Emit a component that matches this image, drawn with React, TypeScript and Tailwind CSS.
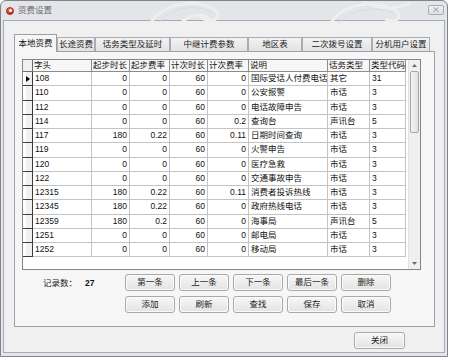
import React from "react";

type Row = [string, string, string, string, string, string, string, string];

const rows: Row[] = [
  ["108", "0", "0", "60", "0", "国际受话人付费电话", "其它", "31"],
  ["110", "0", "0", "60", "0", "公安报警", "市话", "3"],
  ["112", "0", "0", "60", "0", "电话故障申告", "市话", "3"],
  ["114", "0", "0", "60", "0.2", "查询台", "声讯台", "5"],
  ["117", "180", "0.22", "60", "0.11", "日期时间查询", "市话", "3"],
  ["119", "0", "0", "60", "0", "火警申告", "市话", "3"],
  ["120", "0", "0", "60", "0", "医疗急救", "市话", "3"],
  ["122", "0", "0", "60", "0", "交通事故申告", "市话", "3"],
  ["12315", "180", "0.22", "60", "0.11", "消费者投诉热线", "市话", "3"],
  ["12345", "180", "0.22", "60", "0", "政府热线电话", "市话", "3"],
  ["12359", "180", "0.2", "60", "0", "海事局", "声讯台", "5"],
  ["1251", "0", "0", "60", "0", "邮电局", "市话", "3"],
  ["1252", "0", "0", "60", "0", "移动局", "市话", "3"],
];

const headers = ["字头", "起步时长", "起步费率", "计次时长", "计次费率", "说明", "话务类型", "类型代码"];
const numeric = [false, true, true, true, true, false, false, false];

const tabs: { label: string; w: string }[] = [
  { label: "长途资费", w: "w-[38px]" },
  { label: "话务类型及延时", w: "w-[75px]" },
  { label: "中继计费参数", w: "w-[78px]" },
  { label: "地区表", w: "w-[54px]" },
  { label: "二次拨号设置", w: "w-[70px]" },
  { label: "分机用户设置", w: "w-[58px]" },
];

function Btn({ children, w = "w-[50px]" }: { children: React.ReactNode; w?: string }) {
  return (
    <div
      className={`${w} h-[17px] flex items-center justify-center rounded-[3px] border border-[#a9a9a9] bg-gradient-to-b from-[#f7f7f7] to-[#e3e3e3] text-[8.5px] text-[#222] leading-none shadow-[inset_0_0_0_1px_#fbfbfb]`}
    >
      {children}
    </div>
  );
}

export default function App() {
  return (
    <div className="w-[450px] h-[358px] bg-white [font-family:'Liberation_Sans','Noto_Sans_CJK_SC',sans-serif]">
      <div className="relative w-[448px] h-[357px] flex flex-col border border-[#7d848c] rounded-t-[6px] bg-[#e3e5e8] px-[2px] pb-[3px] overflow-hidden">
        {/* decorative swirls */}
        <svg className="absolute left-0 top-0 pointer-events-none" width="448" height="22" viewBox="0 0 448 22">
          <g fill="none" stroke="#eceef0" strokeWidth="3">
            <path d="M150 22 C 160 2, 200 -4, 215 10 C 222 18, 208 24, 200 16" />
            <path d="M180 22 C 190 12, 205 12, 210 20" />
            <path d="M330 22 C 340 4, 372 -2, 392 8 C 404 14, 396 24, 384 18" />
            <path d="M360 -2 C 372 8, 392 10, 410 2" />
          </g>
          <g fill="none" stroke="#d9dcdf" strokeWidth="1">
            <path d="M158 22 C 168 6, 198 2, 210 12" />
            <path d="M338 22 C 350 8, 376 4, 392 12" />
          </g>
        </svg>
        {/* title bar */}
        <div className="relative h-[19px] flex items-center justify-between pl-[3px]">
          <div className="flex items-center gap-[4px]">
            <div className="w-[8px] h-[8px] rounded-full bg-gradient-to-b from-[#f26a5a] to-[#c62a1c] border border-[#a82418] flex items-center justify-center">
              <div className="w-[3px] h-[3px] rounded-full bg-white" />
            </div>
            <span className="text-[8.5px] text-[#6b6b6b] leading-none">资费设置</span>
          </div>
          <div className="w-[16px] h-[10px] mr-[1px] mt-[-2px] rounded-[2px] border border-[#a8acb1] bg-gradient-to-b from-[#eef0f2] to-[#dcdfe3] flex items-center justify-center">
            <svg width="6" height="5" viewBox="0 0 6 5">
              <path d="M0.5 0.5 L5.5 4.5 M5.5 0.5 L0.5 4.5" stroke="#9a9ea3" strokeWidth="1" />
            </svg>
          </div>
        </div>
        {/* client */}
        <div className="flex-1 flex flex-col border border-[#a4abb3] bg-[#f0f0f0]">
          {/* tabs */}
          <div className="relative z-10 flex items-end h-[18px] ml-[10px] mt-[12px]">
            <div className="w-[43px] h-[18px] -mb-px flex items-center justify-center border border-b-0 border-[#9ea2a7] bg-[#f6f6f6] text-[8.5px] text-[#111] leading-none">
              本地资费
            </div>
            {tabs.map((t) => (
              <div
                key={t.label}
                className={`${t.w} h-[14px] flex items-center justify-center border border-b-0 border-[#a9adb2] bg-gradient-to-b from-[#f3f3f3] to-[#e2e2e2] text-[8.5px] text-[#222] leading-none`}
              >
                {t.label}
              </div>
            ))}
          </div>
          {/* panel */}
          <div className="w-[421px] h-[276px] ml-[10px] border border-[#9ea2a7] bg-[#f6f6f6] pl-[7px] pt-[7px] flex flex-col">
            {/* grid */}
            <div className="w-[399px] h-[211px] border border-[#7f868e] bg-white flex">
              <div className="flex-1 overflow-hidden">
                <div className="grid grid-cols-[10px_59px_38px_40px_38px_41px_79px_42px_36px]">
                  <div className="h-[12px] bg-[#f0f0f0] border-r border-b border-[#6e6e6e]" />
                  {headers.map((h) => (
                    <div
                      key={h}
                      className="h-[12px] bg-[#f7f7f7] border-r border-b border-[#8c8c8c] pl-[1px] text-[8.5px] leading-[11px] text-[#111] whitespace-nowrap overflow-hidden"
                    >
                      {h}
                    </div>
                  ))}
                  {rows.map((r, ri) => (
                    <React.Fragment key={r[0]}>
                      <div className="h-[14.25px] bg-[#f0f0f0] border-r border-b border-[#3c3c3c] shadow-[inset_3px_0_0_#ffffff] flex items-center pl-[3px]">
                        {ri === 0 && (
                          <svg width="4" height="6" viewBox="0 0 4 6">
                            <path d="M0 0 L4 3 L0 6 Z" fill="#000" />
                          </svg>
                        )}
                      </div>
                      {r.map((c, ci) => (
                        <div
                          key={ci}
                          className={`h-[14.25px] border-r border-b border-[#c4c4c4] text-[8.5px] leading-[13px] text-[#111] whitespace-nowrap overflow-hidden ${
                            numeric[ci] ? "text-right pr-[2px]" : "pl-[2px]"
                          }`}
                        >
                          {c}
                        </div>
                      ))}
                    </React.Fragment>
                  ))}
                </div>
              </div>
              {/* scrollbar */}
              <div className="w-[12px] h-full bg-[#f0f0f0] border-l border-[#e2e2e2] flex flex-col items-center">
                <div className="h-[11px] w-full flex items-center justify-center">
                  <svg width="5" height="3" viewBox="0 0 5 3">
                    <path d="M0 3 L2.5 0 L5 3 Z" fill="#6a6a6a" />
                  </svg>
                </div>
                <div className="w-[9px] h-[62px] rounded-[2px] border border-[#a7a7a7] bg-gradient-to-r from-[#f4f4f4] to-[#e0e0e0]" />
                <div className="flex-1" />
                <div className="h-[11px] w-full flex items-center justify-center">
                  <svg width="5" height="3" viewBox="0 0 5 3">
                    <path d="M0 0 L2.5 3 L5 0 Z" fill="#6a6a6a" />
                  </svg>
                </div>
              </div>
            </div>
            {/* bottom area */}
            <div className="flex mt-[4px]">
              <div className="w-[103px] pl-[21px] pt-[3px] flex items-start text-[8.5px] leading-[12px] text-[#222]">
                <span>记录数：</span>
                <span className="ml-[8px] font-bold text-[#111]">27</span>
              </div>
              <div className="grid grid-cols-[50px_50px_50px_50px_50px] gap-x-[4px] gap-y-[5px]">
                <Btn>第一条</Btn>
                <Btn>上一条</Btn>
                <Btn>下一条</Btn>
                <Btn>最后一条</Btn>
                <Btn>删除</Btn>
                <Btn>添加</Btn>
                <Btn>刷新</Btn>
                <Btn>查找</Btn>
                <Btn>保存</Btn>
                <Btn>取消</Btn>
              </div>
            </div>
          </div>
          {/* close row */}
          <div className="flex justify-end pr-[39px] mt-[5px]">
            <Btn w="w-[51px]">关闭</Btn>
          </div>
        </div>
      </div>
    </div>
  );
}
